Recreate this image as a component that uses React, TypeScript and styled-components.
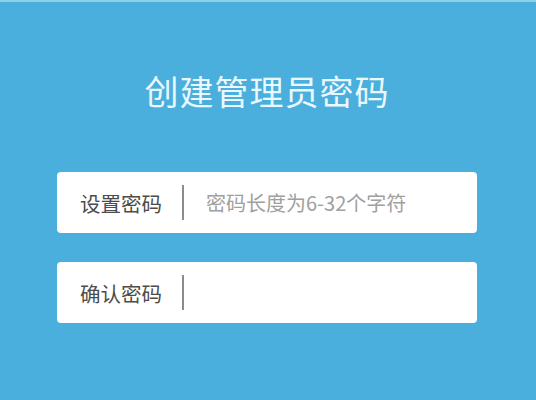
import styled, { createGlobalStyle } from "styled-components";

const GlobalStyle = createGlobalStyle`
  html, body {
    margin: 0;
    padding: 0;
    background: #4aafdc;
    font-family: "Noto Sans CJK SC", "Noto Sans", sans-serif;
  }
`;

const Page = styled.div`
  width: 536px;
  height: 400px;
  box-sizing: border-box;
  background: #4aafdc;
  border-top: 2px solid #8fcfe8;
  padding: 0 59px 0 57px;
  display: flex;
  flex-direction: column;
`;

const Title = styled.h1`
  margin: 64px 0 0;
  height: 50px;
  line-height: 50px;
  text-align: center;
  font-size: 34px;
  font-weight: 400;
  color: #eaf8ff;
  letter-spacing: 1px;
`;

const Form = styled.div`
  margin-top: 56px;
  display: flex;
  flex-direction: column;
  gap: 29px;
`;

const Field = styled.label`
  height: 61px;
  box-sizing: border-box;
  background: #fff;
  border-radius: 4px;
  display: flex;
  align-items: center;
  padding-left: 23px;
`;

const Label = styled.span`
  font-size: 20.5px;
  color: #4c4c4c;
  width: 82px;
  flex-shrink: 0;
`;

const Divider = styled.span`
  width: 2px;
  height: 35px;
  background: #8c8c8c;
  margin: 0 22px 0 20px;
  flex-shrink: 0;
`;

const Input = styled.input`
  flex: 1;
  min-width: 0;
  border: none;
  outline: none;
  background: transparent;
  padding: 0;
  font-family: "Noto Sans CJK SC", "Noto Sans", sans-serif;
  font-size: 20px;
  color: #333;
  &::placeholder {
    color: #a0a0a0;
  }
`;

export default function App() {
  return (
    <Page>
      <GlobalStyle />
      <Title>创建管理员密码</Title>
      <Form>
        <Field>
          <Label>设置密码</Label>
          <Divider />
          <Input type="password" placeholder="密码长度为6-32个字符" />
        </Field>
        <Field>
          <Label>确认密码</Label>
          <Divider />
          <Input type="password" />
        </Field>
      </Form>
    </Page>
  );
}
